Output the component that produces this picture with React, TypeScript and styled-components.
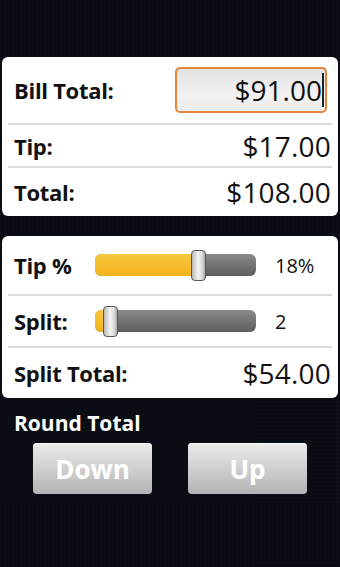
import React from 'react';
import styled, { createGlobalStyle } from 'styled-components';

const GlobalStyle = createGlobalStyle`
    html, body {
        margin: 0;
        padding: 0;
        background: #0b0d14;
    }
    body {
        font-family: "Open Sans", "DejaVu Sans", sans-serif;
    }
`;

const Screen = styled.div`
    width: 340px;
    height: 567px;
    box-sizing: border-box;
    padding: 57px 2px 0;
    background-color: #0a0c13;
    background-image:
        repeating-linear-gradient(0deg, rgba(255,255,255,0.01) 0 1px, transparent 1px 4px),
        repeating-linear-gradient(90deg, rgba(255,255,255,0.01) 0 1px, transparent 1px 4px);
`;

const Card = styled.div<{ $gap?: number }>`
    background: #ffffff;
    border-radius: 6px;
    display: flex;
    flex-direction: column;
    margin-bottom: ${props => props.$gap ?? 0}px;
`;

const Row = styled.div<{ $h: number; $last?: boolean }>`
    height: ${props => props.$h}px;
    box-sizing: border-box;
    margin: 0 6px;
    padding: 0 1px 0 6px;
    display: flex;
    align-items: center;
    border-bottom: ${props => (props.$last ? 'none' : '2px solid #dcdcdc')};
`;

const Label = styled.div<{ $w?: number }>`
    font-weight: 700;
    font-size: 22px;
    letter-spacing: -0.3px;
    color: #111;
    width: ${props => (props.$w ? `${props.$w}px` : 'auto')};
    flex: ${props => (props.$w ? 'none' : '1')};
`;

const Value = styled.div`
    font-size: 28px;
    color: #111;
    letter-spacing: 0.2px;
`;

const Input = styled.div`
    width: 152px;
    height: 46px;
    box-sizing: border-box;
    margin-right: 4px;
    border: 2px solid #e3853a;
    border-radius: 5px;
    background: linear-gradient(#e2e2e2, #f2f2f2 60%, #ececec);
    display: flex;
    align-items: center;
    justify-content: flex-end;
    padding-right: 1px;
    font-size: 28px;
    color: #111;
`;

const Cursor = styled.span`
    display: inline-block;
    width: 2px;
    height: 34px;
    background: #222;
`;

const Track = styled.div`
    position: relative;
    width: 161px;
    height: 22px;
    border-radius: 6px;
    background: linear-gradient(#8a8a8a, #6a6a6a 70%, #5e5e5e);
`;

const Fill = styled.div`
    height: 100%;
    border-radius: 6px 0 0 6px;
    background: linear-gradient(#f8c83c, #f2b21e);
`;

const Thumb = styled.div`
    position: absolute;
    top: -4px;
    width: 15px;
    height: 31px;
    box-sizing: border-box;
    margin-left: -7px;
    border: 1.5px solid #555;
    border-radius: 4px;
    background: linear-gradient(90deg, #b8b8b8, #f4f4f4 45%, #d8d8d8 80%, #aaa);
`;

const SliderValue = styled.div`
    margin-left: 19px;
    font-size: 20px;
    color: #111;
`;

const Heading = styled.div`
    margin: 12px 0 0 12px;
    font-weight: 700;
    font-size: 21px;
    color: #fff;
    line-height: 26px;
`;

const Buttons = styled.div`
    display: flex;
    gap: 36px;
    padding: 7px 0 0 31px;
`;

const Button = styled.button`
    width: 119px;
    height: 51px;
    border: none;
    border-radius: 4px;
    background: linear-gradient(#ececec, #cfcfcf 50%, #b4b4b4);
    box-shadow: inset 0 1px 0 #fff;
    color: #fff;
    font-family: "Open Sans", "DejaVu Sans", sans-serif;
    font-weight: 700;
    font-size: 26px;
    padding: 0;
`;

const Slider = ({ value }: { value: number }) => (
    <Track>
        <Fill style={{ width: `${value * 100}%` }} />
        <Thumb style={{ left: `${value * 100}%` }} />
    </Track>
);

const App = () => (
    <Screen>
        <GlobalStyle />
        <Card $gap={20}>
            <Row $h={68}>
                <Label>Bill Total:</Label>
                <Input>$91.00<Cursor /></Input>
            </Row>
            <Row $h={43}>
                <Label>Tip:</Label>
                <Value>$17.00</Value>
            </Row>
            <Row $h={48} $last>
                <Label>Total:</Label>
                <Value>$108.00</Value>
            </Row>
        </Card>
        <Card>
            <Row $h={60}>
                <Label $w={81}>Tip %</Label>
                <Slider value={0.64} />
                <SliderValue>18%</SliderValue>
            </Row>
            <Row $h={52}>
                <Label $w={81}>Split:</Label>
                <Slider value={0.096} />
                <SliderValue>2</SliderValue>
            </Row>
            <Row $h={50} $last>
                <Label>Split Total:</Label>
                <Value>$54.00</Value>
            </Row>
        </Card>
        <Heading>Round Total</Heading>
        <Buttons>
            <Button>Down</Button>
            <Button>Up</Button>
        </Buttons>
    </Screen>
);

export default App;
